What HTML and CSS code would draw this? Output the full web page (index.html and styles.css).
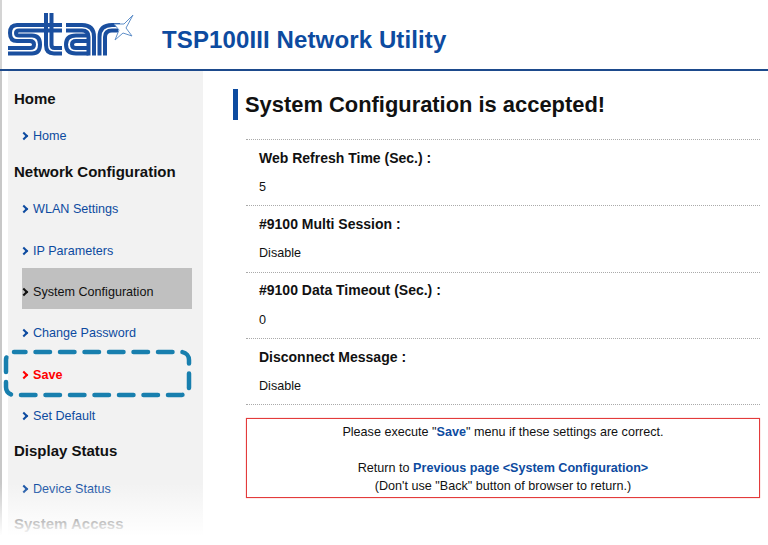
FILE: index.html
```html
<!DOCTYPE html>
<html lang="en">
<head>
    <meta charset="UTF-8">
    <meta name="viewport" content="width=device-width, initial-scale=1.0">
    <title>TSP100III Network Utility</title>
    <link rel="stylesheet" href="styles.css">
</head>
<body>
    <!-- Header -->
    <header class="topo">
        <svg class="logo" width="126" height="44" viewBox="0 0 126 44" aria-label="star">
            <g fill="none" stroke="#1a4f9f" stroke-width="4">
                <path d="M54 12H9Q2 12 2 20Q2 28 9 28H22Q26 28 26 31.5Q26 35 22 35H0"/>
                <path d="M54 17.5H11Q8 17.5 8 20Q8 22.5 11 22.5H24Q32 22.5 32 31.5Q32 40.5 24 40.5H0"/>
                <path d="M38 0V32Q38 40.5 46 40.5H54"/>
                <path d="M43.5 0V32Q43.5 35 46.5 35H54"/>
                <path d="M58 12H74Q86 12 86 24V42.5"/>
                <path d="M58 17.5H74Q80.5 17.5 80.5 24V42.5"/>
                <path d="M80.5 22.5H68Q58 22.5 58 31.5Q58 40.5 68 40.5H80.5"/>
                <path d="M80.5 28H68Q64 28 64 31.5Q64 35 68 35H80.5"/>
                <path d="M91.5 42.5V24Q91.5 12 104 12H112"/>
                <path d="M97 42.5V24Q97 17.5 104 17.5H110"/>
            </g>
            <path d="M125 2L116 11L106 11L111 17L107 27L115 20L124 23L118 15Z" fill="#fff" stroke="#5f8fc9" stroke-width="1"/>
        </svg>
        <h1 class="titulo-app">TSP100III Network Utility</h1>
    </header>

    <div class="pagina">
        <!-- Menu lateral -->
        <nav class="menu">
            <h2>Home</h2>
            <a class="item" href="#">Home</a>
            <h2>Network Configuration</h2>
            <a class="item" href="#">WLAN Settings</a>
            <a class="item" href="#">IP Parameters</a>
            <a class="item atual" href="#">System Configuration</a>
            <a class="item" href="#">Change Password</a>
            <a class="item salvar" href="#">Save</a>
            <a class="item" href="#">Set Default</a>
            <h2>Display Status</h2>
            <a class="item" href="#">Device Status</a>
            <h2>System Access</h2>
        </nav>
        <div class="esmaecer"></div>

        <!-- Destaque sobre o item Save -->
        <svg class="destaque" width="192" height="52" viewBox="0 0 192 52">
            <rect x="4" y="4" width="183" height="43" rx="8" fill="none" stroke="#187fae" stroke-width="4.5" stroke-dasharray="14.5 10" stroke-dashoffset="3" stroke-linecap="round"/>
        </svg>

        <!-- Conteudo -->
        <main class="conteudo">
            <h2 class="titulo">System Configuration is accepted!</h2>
            <div class="linhas">
                <section class="linha">
                    <h3>Web Refresh Time (Sec.) :</h3>
                    <p>5</p>
                </section>
                <section class="linha">
                    <h3>#9100 Multi Session :</h3>
                    <p>Disable</p>
                </section>
                <section class="linha">
                    <h3>#9100 Data Timeout (Sec.) :</h3>
                    <p>0</p>
                </section>
                <section class="linha">
                    <h3>Disconnect Message :</h3>
                    <p>Disable</p>
                </section>
            </div>
            <div class="aviso">
                <p class="aviso-topo">Please execute "<a href="#">Save</a>" menu if these settings are correct.</p>
                <p>Return to <a href="#">Previous page &lt;System Configuration&gt;</a></p>
                <p>(Don't use "Back" button of browser to return.)</p>
            </div>
        </main>
    </div>
</body>
</html>
```

FILE: styles.css
```css
* {
  margin: 0;
  padding: 0;
  box-sizing: border-box;
}

html, body {
  height: 545px;
  overflow: hidden;
}

body {
  font-family: "Liberation Sans", Arial, sans-serif;
  background-color: white;
  color: #111;
  font-size: 12.6px;
}

a {
  text-decoration: none;
  color: #0d4ba0;
}

.topo {
  height: 71px;
  display: flex;
  align-items: flex-start;
  padding: 13px 0 0 8px;
  border-bottom: 2px solid #1d4a8c;
  box-shadow: inset 2px 0 0 #d4d4d4;
}

.titulo-app {
  font-size: 24px;
  line-height: 28px;
  letter-spacing: 0.12px;
  margin: 13px 0 0 28px;
  color: #0d4ba0;
}

.pagina {
  position: relative;
  display: flex;
  height: 474px;
  border-left: 2px solid #c8c8c8;
}

.menu {
  width: 195px;
  margin-left: 6px;
  padding-top: 9.7px;
  background-color: #f2f2f2;
  overflow: hidden;
  flex-shrink: 0;
}

.menu h2 {
  font-size: 15px;
  line-height: 18px;
  height: 31.7px;
  padding: 9.3px 0 0 6px;
  color: #111;
}

.item {
  display: block;
  position: relative;
  width: 170px;
  margin-left: 14px;
  height: 41.3px;
  padding: 7px 0 0 11px;
  line-height: 35.3px;
  color: #0d4ba0;
}

.item::before {
  content: "";
  box-sizing: border-box;
  position: absolute;
  left: -1.5px;
  top: 21px;
  width: 6px;
  height: 6px;
  border-top: 2.5px solid currentColor;
  border-right: 2.5px solid currentColor;
  transform: rotate(45deg);
}

.atual {
  background-color: #c0c0c0;
  color: #111;
}

.salvar {
  color: #ff0000;
  font-weight: bold;
}

/* fade no fim da coluna lateral */
.esmaecer {
  position: absolute;
  left: -2px;
  bottom: 0;
  width: 206px;
  height: 62px;
  background: linear-gradient(to bottom, rgba(255, 255, 255, 0), white 85%);
}

.destaque {
  position: absolute;
  left: 0;
  top: 277px;
}

.conteudo {
  flex: 1;
  padding: 18px 8px 0 30px;
}

.titulo {
  font-size: 21.9px;
  line-height: 31px;
  border-left: 5px solid #0d4ba0;
  padding-left: 7px;
  color: #111;
}

.linhas {
  margin: 19px 0 0 13px;
  border-top: 1px dotted #aaa;
}

.linha {
  height: 66.3px;
  padding: 9.9px 0 0 13px;
  border-bottom: 1px dotted #aaa;
}

.linha h3 {
  font-size: 14px;
  line-height: 17px;
}

.linha p {
  margin-top: 12.1px;
  line-height: 16px;
}

.aviso {
  margin: 13px 0 0 13px;
  height: 80px;
  border: 1px solid #e33b3b;
  box-shadow: 0 0 1px #f08080;
  text-align: center;
  padding-top: 4px;
  line-height: 18px;
}

.aviso a {
  font-weight: bold;
}

.aviso-topo {
  margin-bottom: 18px;
}
```
